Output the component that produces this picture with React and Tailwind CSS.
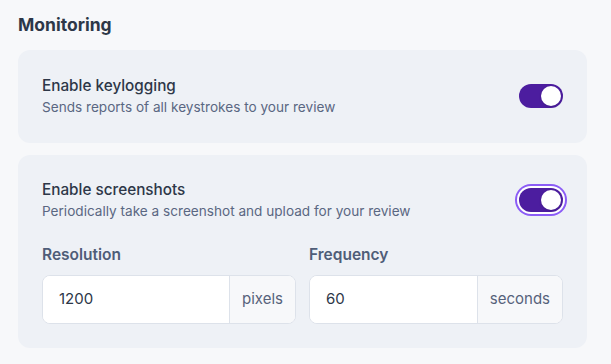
import React, { useState } from "react";

const font = { fontFamily: "Inter, 'Noto Sans', sans-serif" };

function Toggle({ on, focused, onChange }) {
  return (
    <button
      onClick={onChange}
      className={`relative h-6 w-11 shrink-0 rounded-full transition ${
        on ? "bg-[#4c1d9f]" : "bg-slate-300"
      } ${focused ? "ring-2 ring-[#8b5cf6] ring-offset-2 ring-offset-white" : ""}`}
    >
      <span
        className={`absolute top-[2px] h-5 w-5 rounded-full bg-white shadow transition-all ${
          on ? "left-[22px]" : "left-[2px]"
        }`}
      />
    </button>
  );
}

function Field({ label, value, unit }) {
  return (
    <div className="flex flex-col gap-[10px]">
      <span className="text-[15.5px] leading-5 font-semibold text-[#4f5d78]">{label}</span>
      <div className="flex h-[49px] rounded-lg border border-[#dde2ea] bg-white overflow-hidden">
        <input
          defaultValue={value}
          className="min-w-0 flex-1 px-4 text-[15px] text-[#2d3748] outline-none bg-white"
          style={font}
        />
        <span className="flex items-center border-l border-[#dde2ea] bg-[#f7f8fa] px-3 text-[15px] text-[#56627a]">
          {unit}
        </span>
      </div>
    </div>
  );
}

export default function App() {
  const [keys, setKeys] = useState(true);
  const [shots, setShots] = useState(true);

  return (
    <div className="min-h-[364px] w-full bg-[#f7f8fa] pl-[18px] pr-[24px] pt-[13px]" style={font}>
      <h2 className="text-[17.5px] leading-6 font-bold text-[#2d3748]">Monitoring</h2>

      <div className="mt-[13px] flex flex-col gap-3">
        <div className="flex items-center justify-between rounded-xl bg-[#eef1f6] px-6 pt-[25px] pb-[26px]">
          <div>
            <div className="text-[15.3px] leading-[22px] font-medium text-[#2d3748]">Enable keylogging</div>
            <div className="text-[13.6px] leading-5 text-[#5a6782]">Sends reports of all keystrokes to your review</div>
          </div>
          <Toggle on={keys} onChange={() => setKeys(!keys)} />
        </div>

        <div className="rounded-xl bg-[#eef1f6] px-6 pt-6 pb-6">
          <div className="flex items-center justify-between">
            <div>
              <div className="text-[15.3px] leading-[22px] font-medium text-[#2d3748]">Enable screenshots</div>
              <div className="text-[13.6px] leading-5 text-[#5a6782]">
                Periodically take a screenshot and upload for your review
              </div>
            </div>
            <Toggle on={shots} focused onChange={() => setShots(!shots)} />
          </div>
          <div className="mt-[24px] grid grid-cols-2 gap-[13px]">
            <Field label="Resolution" value="1200" unit="pixels" />
            <Field label="Frequency" value="60" unit="seconds" />
          </div>
        </div>
      </div>
    </div>
  );
}
